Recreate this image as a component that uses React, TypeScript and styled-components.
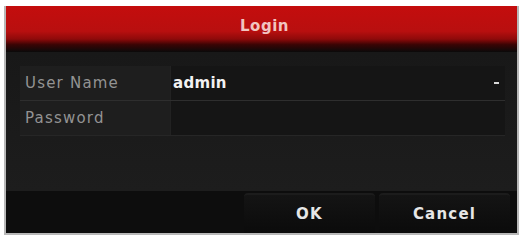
import styled, { createGlobalStyle } from "styled-components";

const GlobalStyle = createGlobalStyle`
  html, body {
    margin: 0;
    padding: 0;
    background: #ffffff;
  }
  body {
    font-family: "DejaVu Sans", "Liberation Sans", sans-serif;
  }
`;

function App() {
  return (
    <>
      <GlobalStyle />
      <Page>
        <Dialog>
          <TitleBar>Login</TitleBar>
          <Body>
            <Form>
              <Row>
                <Label>User Name</Label>
                <Field>
                  <Value>admin</Value>
                  <Dash />
                </Field>
              </Row>
              <Row last>
                <Label>Password</Label>
                <Field />
              </Row>
            </Form>
          </Body>
          <Footer>
            <Button>OK</Button>
            <Button>Cancel</Button>
          </Footer>
        </Dialog>
      </Page>
    </>
  );
}

const Page = styled.div`
  width: 523px;
  height: 237px;
  padding: 6px 4px 4px 4px;
  box-sizing: border-box;
`;

const Dialog = styled.div`
  display: flex;
  flex-direction: column;
  height: 227px;
  border: 2px solid #b8b8b8;
  border-top: none;
  background: #1b1b1b;
`;

const TitleBar = styled.div`
  height: 46px;
  display: flex;
  align-items: center;
  justify-content: center;
  padding: 0 0 6px 6px;
  box-sizing: border-box;
  font-size: 15px;
  font-weight: bold;
  letter-spacing: 0.5px;
  color: #f1c4c0;
  background: linear-gradient(
    to bottom,
    #c40d0d 0%,
    #b80f0f 55%,
    #8e0a0a 72%,
    #3a0404 84%,
    #0a0a0a 100%
  );
`;

const Body = styled.div`
  flex: 1;
  padding: 14px 12px 0 14px;
  background: linear-gradient(to bottom, #181818 0%, #1d1d1d 100%);
`;

const Form = styled.div`
  display: flex;
  flex-direction: column;
  background: #1a1a1a;
`;

const Row = styled.div<{ last?: boolean }>`
  display: grid;
  grid-template-columns: 151px 1fr;
  height: 34px;
  border-bottom: 1px solid ${(p) => (p.last ? "#262626" : "#2e2e2e")};
  align-items: center;
`;

const Label = styled.div`
  padding-left: 5px;
  font-size: 15px;
  letter-spacing: 1.2px;
  color: #939393;
  height: 100%;
  display: flex;
  align-items: center;
  background: #1e1e1e;
  border-right: 1px solid #222;
`;

const Field = styled.div`
  height: 100%;
  display: flex;
  align-items: center;
  justify-content: space-between;
  padding: 0 6px 0 2px;
  background: #151515;
`;

const Value = styled.span`
  font-size: 15px;
  font-weight: bold;
  letter-spacing: 0.3px;
  color: #f2f2f2;
`;

const Dash = styled.span`
  width: 5px;
  height: 2px;
  background: #d8d8d8;
`;

const Footer = styled.div`
  height: 40px;
  display: flex;
  justify-content: flex-end;
  align-items: stretch;
  gap: 4px;
  padding: 2px 7px 0 0;
  background: #0d0d0d;
`;

const Button = styled.div`
  width: 131px;
  display: flex;
  align-items: center;
  justify-content: center;
  font-size: 15px;
  font-weight: bold;
  letter-spacing: 1.2px;
  color: #e6e6e6;
  border-top: 2px solid #1c1c1c;
  border-radius: 4px 4px 0 0;
  background: linear-gradient(to bottom, #141414 0%, #0b0b0b 100%);
`;

export default App;
